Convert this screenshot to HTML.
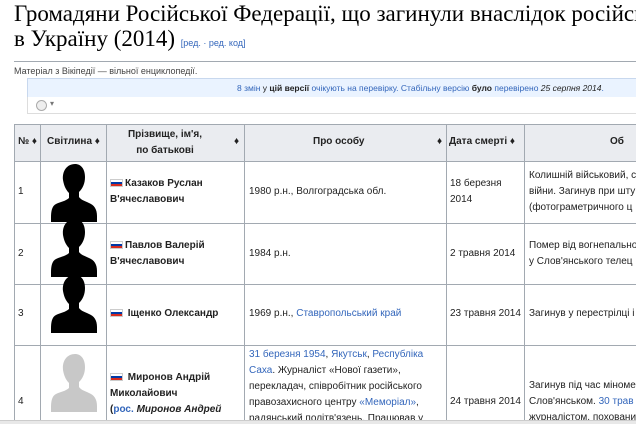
<!DOCTYPE html>
<html><head><meta charset="utf-8"><style>
html,body{margin:0;width:636px;height:424px;overflow:hidden}
body{background:#fff;font-family:"Liberation Sans",Arial,sans-serif;position:relative}
.a{position:absolute;white-space:nowrap}
h1{position:absolute;left:14px;top:1px;margin:0;font:normal 23px/25px "Liberation Serif",serif;color:#000;white-space:nowrap}
.l{color:#3366bb}
.c{position:absolute;font-size:10px;line-height:16px;color:#222;white-space:nowrap}
.v{position:absolute;top:124px;height:300px;width:1px;background:#a2a9b1}
.h{position:absolute;left:14px;width:622px;height:1px;background:#a2a9b1}
.hd{position:absolute;top:124px;height:37px;background:#eaecf0}
.flag{display:inline-block;width:13px;height:8px;background:linear-gradient(#fff 33%,#0039a6 33% 66%,#d52b1e 66%);vertical-align:middle;margin-right:2px;border:1px solid #ccc;box-sizing:border-box}
b{font-weight:bold}
</style></head><body>
<h1>Громадяни Російської Федерації, що загинули внаслідок російської<br>в Україну (2014) <span style="font:9px 'Liberation Sans',sans-serif;color:#3366bb">[ред. · ред. код]</span></h1>
<div class="a" style="left:14px;top:61px;width:622px;height:1px;background:#a2a9b1"></div>
<div class="a" style="left:14px;top:66px;font-size:9px;color:#444">Матеріал з Вікіпедії — вільної енциклопедії.</div>
<div class="a" style="left:27px;top:78px;width:620px;height:18px;background:#eaf3ff;border:1px solid #c8d8ee;font-size:8.5px;line-height:18px;color:#3366bb"><span style="position:absolute;left:209px"><span class="l">8 змін</span> <span style="color:#222">у</span> <b style="color:#222">цій версії</b> очікують на перевірку. Стабільну версію <b style="color:#222">було</b> перевірено <i style="color:#222">25 серпня 2014</i>.</span></div>
<div class="a" style="left:27px;top:97px;width:620px;height:16px;border:1px solid #ddd;border-top:none;background:#fff"><span style="position:absolute;left:8px;top:3px;width:9px;height:9px;border-radius:50%;border:1px solid #aaa;background:#eee"></span><span style="position:absolute;left:22px;top:2px;font-size:8px;color:#777">▾</span></div>

<div class="hd" style="left:14px;width:622px"></div>
<div class="c" style="left:18px;top:134px;font-weight:bold">№ ♦</div>
<div class="c" style="left:47px;top:134px;font-weight:bold">Світлина ♦</div>
<div class="c" style="left:125px;top:127px;font-weight:bold;text-align:center;width:80px">Прізвище, ім'я,<br>по батькові</div>
<div class="c" style="left:234px;top:134px;font-weight:bold">♦</div>
<div class="c" style="left:313px;top:134px;font-weight:bold">Про особу</div>
<div class="c" style="left:437px;top:134px;font-weight:bold">♦</div>
<div class="c" style="left:449px;top:134px;font-weight:bold">Дата смерті ♦</div>
<div class="c" style="left:610px;top:134px;font-weight:bold">Об</div>

<div class="v" style="left:14px"></div><div class="v" style="left:40px"></div><div class="v" style="left:106px"></div><div class="v" style="left:244px"></div><div class="v" style="left:446px"></div><div class="v" style="left:524px"></div>
<div class="h" style="top:124px"></div><div class="h" style="top:161px"></div><div class="h" style="top:223px"></div><div class="h" style="top:284px"></div><div class="h" style="top:345px"></div>

<svg class="a" style="left:46px;top:162px" width="56" height="262" viewBox="0 0 50 262">
<g fill="#000"><path id="s" d="M26 2c-8 0-13 7-12 16 1 6 3 10 6 13v5c-3 3-9 4-13 6-4 2-5 7-5 14v4h46v-6c0-7-3-11-8-13-4-2-8-3-10-6v-5c4-4 6-9 6-15 0-8-4-13-10-13z"/>
<use href="#s" y="55"/><use href="#s" y="111"/></g>
<use href="#s" y="190" fill="#c8c8c8"/>
</svg>

<div class="c" style="left:18px;top:184px">1</div>
<div class="c" style="left:110px;top:176px;font-weight:bold"><span class="flag"></span>Казаков Руслан<br>В'ячеславович</div>
<div class="c" style="left:249px;top:184px">1980 р.н., Волгоградська обл.</div>
<div class="c l" style="left:450px;top:176px">18 березня<br>2014</div>
<div class="c" style="left:529px;top:168px">Колишній військовий, с<br>війни. Загинув при шту<br>(фотограметричного ц</div>

<div class="c" style="left:18px;top:246px">2</div>
<div class="c" style="left:110px;top:238px;font-weight:bold"><span class="flag"></span>Павлов Валерій<br>В'ячеславович</div>
<div class="c" style="left:249px;top:246px">1984 р.н.</div>
<div class="c l" style="left:450px;top:246px">2 травня 2014</div>
<div class="c" style="left:529px;top:238px">Помер від вогнепально<br>у Слов'янського телец</div>

<div class="c" style="left:18px;top:306px">3</div>
<div class="c" style="left:110px;top:306px;font-weight:bold"><span class="flag"></span> Іщенко Олександр</div>
<div class="c" style="left:249px;top:306px">1969 р.н., <span class="l">Ставропольський край</span></div>
<div class="c l" style="left:450px;top:306px">23 травня 2014</div>
<div class="c" style="left:529px;top:306px">Загинув у перестрілці і</div>

<div class="c" style="left:18px;top:394px">4</div>
<div class="c" style="left:110px;top:370px;font-weight:bold"><span class="flag"></span> Миронов Андрій<br>Миколайович<br>(<span class="l">рос.</span> <i>Миронов Андрей</i></div>
<div class="c" style="left:249px;top:347px"><span class="l">31 березня 1954</span>, <span class="l">Якутськ</span>, <span class="l">Республіка<br>Саха</span>. Журналіст «Нової газети»,<br>перекладач, співробітник російського<br>правозахисного центру <span class="l">«Меморіал»</span>,<br>радянський політв'язень. Працював у</div>
<div class="c l" style="left:450px;top:394px">24 травня 2014</div>
<div class="c" style="left:529px;top:378px">Загинув під час міноме<br>Слов'янськом. <span class="l">30 трав</span><br>журналістом, поховани</div>
<div class="a" style="left:0;top:420px;width:636px;height:4px;background:#e8e8e8;border-top:1px solid #ccc"></div>
</body></html>
